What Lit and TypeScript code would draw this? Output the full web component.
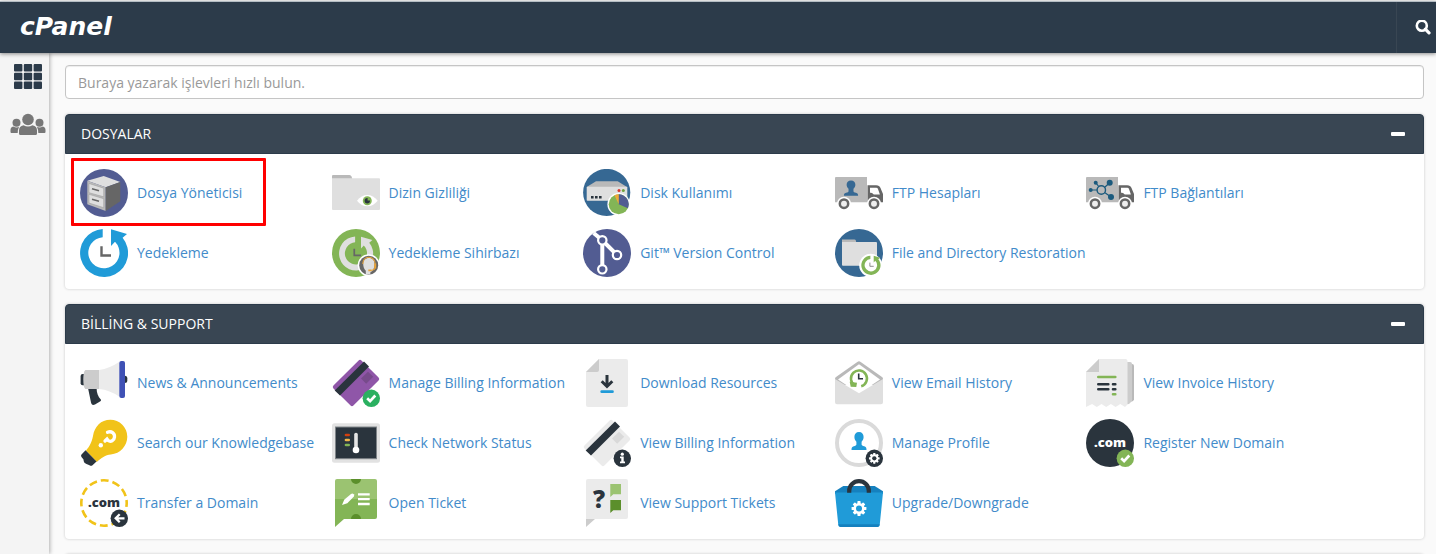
import { LitElement, html, css, svg, SVGTemplateResult } from "lit";
import { customElement, property, state } from "lit/decorators.js";

const DARK = "#2a343d";
const GREEN = "#83b556";
const BLUE = "#209bd8";
const STEEL = "#366893";
const INDIGO = "#525c92";

/* Shared drawing parts, all on a 48 x 48 grid */

const restoreArrow = (fill: string, hands = "#666") => svg`
  <path fill=${fill} d="M22.7 0A24 24 0 1 0 42.6 8.7L47 5 31 .3V17l4-4.2A15.6 15.6 0 1 1 22.7 8.2z"/>
  <path fill="none" stroke=${hands} stroke-width="2.4" d="M21.5 17.3v9.2H31"/>`;

const gear = (cx: number, cy: number, s: number, hole: string) => svg`
  <g transform="translate(${cx} ${cy}) scale(${s})">
    ${[0, 45, 90, 135].map((a) => svg`<rect x="-1.6" y="-7.4" width="3.2" height="14.8" rx=".7" fill="#fff" transform="rotate(${a})"/>`)}
    <circle r="5.5" fill="#fff"/><circle r="3" fill=${hole}/>
  </g>`;

const truck = (load: SVGTemplateResult) => svg`
  <path fill="#b9b9b9" d="M1 8h31v25.3H0V9a1 1 0 0 1 1-1z"/>
  <path fill="#666" d="M32.5 16.3h8.7c2.4 0 3.4.8 4.3 2.6l2.5 6v8.4H32.5z"/>
  <path fill="#fff" d="M35 18.7h6.3c.8 0 1.3.4 1.6 1.100l2 5.700h-5.400c-1.700 0-1.500-1.700-4.500-1.700z"/>
  ${[9, 39].map((x) => svg`<circle cx=${x} cy="34.7" r="7" fill="#fff"/><circle cx=${x} cy="34.7" r="4.2" fill="#eee" stroke="#666" stroke-width="2.5"/>`)}
  ${load}`;

const card = (body: string, patch: string) => svg`
  <rect x="-14.1" y="-19.8" width="28.2" height="39.6" rx="2" fill=${body} transform="translate(24 24) rotate(45)"/>
  <path fill=${DARK} d="M32 2.6l5 5L8 36.6l-5.3-5z"/>
  <path fill=${patch} d="M36 12.7l5.200 5.100-7 6.900-5.200-5.200z"/>`;

const check = (fill: string) => svg`
  <circle cx="39.3" cy="39.3" r="8.7" fill=${fill}/>
  <path d="M35.2 39.3l2.9 2.8 5.200-5.600" fill="none" stroke="#fff" stroke-width="2.7"/>`;

const person = (fill: string) => svg`
  <path fill=${fill} d="M0-9c3 0 4.600 2.100 4.600 5 0 2-.9 3.700-2 4.700v2.800c0 .9 1 1.300 2.600 1.800C7 6 7.500 6.600 7.500 9h-15c0-2.400.5-3 2.300-3.700C-3.600 4.800-2.600 4.400-2.600 3.500V.7c-1.100-1-2-2.700-2-4.700 0-2.900 1.600-5 4.600-5z"/>`;

const disc = (fill: string) => svg`<circle cx="24" cy="24" r="24" fill=${fill}/>`;

const ICONS: Record<string, SVGTemplateResult> = {
  cabinet: svg`${disc(INDIGO)}
    <path fill="#dfdfdf" d="M7.300 11.700L23.700 7l16.600 6-14.600 5.300z"/>
    <path fill="#b9b9b9" d="M7.300 11.700l18.400 6.600V42L7.300 35.300z"/>
    <path fill="#666" d="M25.700 18.300L40.300 13v19.300L25.700 42z"/>
    <path fill="#dfdfdf" stroke="#999" stroke-width=".5" d="M9 14.500l14.700 4.700v8.600L9 23.700zM9 25.300l14.700 4.400v9L9 34z"/>
    <path stroke="#666" stroke-width="1.7" d="M12 19.800l7 2M12 30.300l7 2"/>`,
  folderEye: svg`
    <path fill="#b9b9b9" d="M0 10V7q0-1 1-1h16.500q1.500 0 2 1.500L20.300 10z"/>
    <path fill="#dfdfdf" d="M0 9.300h47q1 0 1 1V40q0 1-1 1H1q-1 0-1-1z"/>
    <path fill="#fff" d="M25 31.700Q29.500 26 35.300 26t10.400 5.700q-4.600 5.500-10.400 5.500T25 31.700z"/>
    <circle cx="35.3" cy="31.7" r="4.5" fill=${GREEN}/><circle cx="35.3" cy="31.7" r="2.7" fill=${DARK}/>
    <path fill=${GREEN} d="M35.600 31.400v-3.100l3.100 1.500v1.600z"/>`,
  disk: svg`<circle cx="23.7" cy="23.5" r="23.6" fill=${STEEL}/>
    <path fill="#b9b9b9" d="M3.700 18L13 12.300h21.700L44 18z"/>
    <rect x="3.7" y="17.7" width="40.6" height="14" rx=".8" fill="#dfdfdf"/>
    <circle cx="36" cy="21.5" r="1.5" fill="#d9362b"/><circle cx="40.3" cy="21.5" r="1.5" fill="#6fa03b"/>
    <path fill=${DARK} d="M8 27h2.600v2.600H8zM12 27h2.600v2.600H12zM16 27h2.600v2.600H16z"/>
    <circle cx="35.7" cy="35.3" r="11.3" fill="#fff"/><circle cx="35.7" cy="35.3" r="10" fill=${GREEN}/>
    <path fill=${INDIGO} d="M35.700 35.300v-10a10 10 0 0 1 9.200 14z"/>
    <path fill="#f0a73a" d="M35.700 35.300l-4.200-9.100a10 10 0 0 1 4.200-.9z"/>`,
  truckUser: truck(svg`<g transform="translate(16 19.2) scale(.95 .85)">${person(STEEL)}</g>`),
  truckNet: truck(svg`
    <path stroke="#1b5a7d" stroke-width="1.2" d="M4.700 21H11M9.700 13.700l3 3.800M23.700 13.700l-5 4.600M25 28l-6-4.300"/>
    <circle cx="15.3" cy="21" r="4.2" fill="none" stroke="#1b5a7d" stroke-width="1.4"/>
    <g fill="#1b5a7d"><circle cx="9.7" cy="13.7" r="2"/><circle cx="4.7" cy="21" r="2"/><circle cx="23.7" cy="13.7" r="3"/><circle cx="25" cy="28" r="3"/></g>`),
  backup: restoreArrow(BLUE),
  backupWizard: svg`${disc(GREEN)}
    <g transform="translate(7 7.5) scale(.71)">${restoreArrow("#dfdfdf")}</g>
    <circle cx="36.7" cy="36.3" r="11" fill="#fff"/><circle cx="36.7" cy="36.3" r="9.5" fill="#666"/>
    <path fill="#dfdfdf" d="M37 29c3.600 0 5.500 2.500 5.500 6 0 4.500-2 7.600-4 8l-.3 2.500h-4.400V41.800c-1.500-1.500-2.600-4-2.600-6.800 0-3.500 2.200-6 5.800-6z"/>
    <path fill="none" stroke="#e8a33a" stroke-width="1.1" d="M30.800 35c0-4 2.500-6.800 6-6.800s6.400 2.800 6.400 6.800v3.500q0 2.500-5 3"/>
    <path fill="#e8a33a" d="M42.200 34.500h2v5h-2zM36.300 40.400h3v1.900h-3z"/>`,
  git: svg`${disc(INDIGO)}
    <path fill="none" stroke="#fff" stroke-width="4" d="M19.300 11.300v29M10.600 4l8.700 7.300L34 26"/>
    <g fill=${INDIGO} stroke="#fff" stroke-width="2.2"><circle cx="19.3" cy="11.3" r="4.2"/><circle cx="34" cy="26" r="4.2"/><circle cx="19.3" cy="40.3" r="4.2"/></g>`,
  folderRestore: svg`${disc(STEEL)}
    <path fill="#b9b9b9" d="M7 14v-3.500h12.500q1 0 1.300 1l.7 2.500z"/>
    <path fill="#dfdfdf" d="M7 13h34q1 0 1 1v22.700H8q-1 0-1-1z"/>
    <circle cx="35.7" cy="36.3" r="11.5" fill="#fff"/>
    <g transform="translate(26.3 26.7) scale(.4)">${restoreArrow(GREEN, "#888")}</g>`,
  megaphone: svg`
    <rect x=".6" y="15" width="6" height="11.3" rx="2" fill=${DARK}/>
    <rect x="42" y="16.7" width="5.3" height="7.3" rx="2.5" fill=${DARK}/>
    <path fill=${DARK} d="M8 29h8.600c0 5 1.500 8.800 4.200 11.500.5.700.2 1.300-.4 1.700L15 45.600c-2.500.8-3.400.2-4-2z"/>
    <path fill="#ccc" d="M5.300 11h14v19h-14q-2-1.500-2-9.500t2-9.500z"/>
    <path fill="#ebebeb" d="M19.300 11q10-1.500 20.200-8.300v35Q29.500 31 19.300 30z"/>
    <rect x="39.3" y="2" width="5.7" height="37" rx="2" fill="#3f51b5"/>`,
  cardCheck: svg`${card("#8f56a8", "#774b8b")}${check("#2ab060")}`,
  download: svg`
    <path fill="#ebebeb" d="M16 0h27q2 0 2 2v44q0 2-2 2H5q-2 0-2-2V13z"/><path fill="#ccc" d="M3 13L16 0v11q0 2-2 2z"/>
    <path fill="none" stroke=${DARK} stroke-width="3" d="M24 16v11M18.700 22.300l5.300 5.200 5.300-5.200"/>
    <path stroke=${BLUE} stroke-width="2.7" stroke-linecap="round" d="M18.700 32.700h10.800"/>`,
  emailHistory: svg`
    <path fill="#b9b9b9" d="M0 20q0-1.500 1-2L22.300 3q1.700-1.400 3.400 0L47 18q1 .5 1 2v6H0z"/>
    <path fill="#fff" d="M3 20.500L24 5.300l21 15.200-21 14z"/>
    <path fill="#dfdfdf" d="M0 20l24 14.300L48 20v23.300q0 2-2 2H2q-2 0-2-2z"/>
    <path fill="none" stroke=${GREEN} stroke-width="2.5" d="M19.700 26.300a8 8 0 1 1 6.500 0.900"/>
    <path fill=${GREEN} d="M14.700 22.700l7.300 1-.7 4.300-5.600-.3z"/>
    <path fill="none" stroke=${DARK} stroke-width="1.6" d="M23.700 14.500v5.200h4.300"/>`,
  invoice: svg`
    <path fill="#b9b9b9" d="M44 5h2q2 0 2 2v34l-2.500 2z"/><path fill="#ccc" d="M39 3h5q2 0 2 2v37l-3 3-4 .5z"/>
    <path fill="#ebebeb" d="M13 0h26.500q2 0 2 2v43.500L39 48l-4.700-3-4.700 3-4.700-3-4.700 3-4.700-3-4.700 3-4.700-3L0 48V13z"/>
    <path fill="#ccc" d="M0 13L13 0v13z"/>
    <g stroke-width="2.6" stroke-linecap="round"><path stroke=${GREEN} d="M12.300 18h17M27 35.200h2.300"/>
    <path stroke=${DARK} d="M12.300 25.300h10M27 25.300h2.300M12.300 30.300h10M27 30.300h2.300"/></g>`,
  bulb: svg`
    <path fill="#f1c319" d="M30.300.8a17 17 0 0 1 17 17c0 9-7 17-16.500 17.700-5.500.5-9.500 3.500-14 7.500L6 31.500c4-4.500 5.700-8.500 7-14.500C14.500 7.500 21 .8 30.300.8z"/>
    <path fill=${DARK} d="M5.600 31.300l10.900 11.200-4 3.800q-1.500 1-3 0L6.500 45q-3-1-3-4.500l-2-2.500q-1-1.500 0-2.600z"/>
    <path fill="none" stroke="#fff" stroke-width="3.3" stroke-linecap="round" d="M27.500 13.300c4-1.700 7.300 1 7 4.700-.3 3.600-3.700 5.400-6.500 3.500l-1-1.500-2 2"/>
    <circle cx="20.8" cy="26.3" r="2.2" fill="#fff"/>`,
  monitor: svg`
    <rect y="4.3" width="48" height="39.4" rx="2.5" fill="#e2e2e2"/>
    <rect x="3.5" y="8" width="41" height="31.7" fill=${DARK} stroke="#808589"/>
    <g stroke-width="2.7" stroke-linecap="round"><path stroke="#d2400f" d="M14 16h2.700"/><path stroke="#f2b84b" d="M14 21h2.700"/><path stroke=${GREEN} d="M14 26h2.700"/></g>
    <path stroke="#e5e5e5" stroke-width="3.6" stroke-linecap="round" d="M24 15.500v15"/><circle cx="24" cy="31" r="3.3" fill="#fff"/>`,
  cardInfo: svg`${card("#ebebeb", "#d9d9d9")}
    <circle cx="39.3" cy="39.3" r="8.7" fill=${DARK}/>
    <circle cx="39.3" cy="35.2" r="1.6" fill="#fff"/><path fill="#fff" d="M37 37.500h3.700v5h1.300v1.700h-5v-1.700h1.300v-3.300H37z"/>`,
  profile: svg`<circle cx="24" cy="24" r="22" fill="#fff" stroke="#dadada" stroke-width="4"/>
    <g transform="translate(24 22)">${person(BLUE)}</g>
    <circle cx="39.3" cy="39.3" r="8.7" fill=${DARK}/>${gear(39.3, 39.3, 0.72, DARK)}`,
  register: svg`${disc(DARK)}<text class="com" x="24" y="27.5" fill="#fff">.com</text>${check(GREEN)}`,
  transfer: svg`
    <circle cx="24" cy="24" r="22.7" fill="none" stroke="#f1c319" stroke-width="2.6" stroke-dasharray="8 3.886" stroke-dashoffset="4"/>
    <text class="com" x="24" y="27.5" fill=${DARK}>.com</text>
    <circle cx="39.3" cy="39.3" r="8.7" fill=${DARK}/>
    <path fill="none" stroke="#fff" stroke-width="2.3" d="M44.500 39.300h-8M39.700 35.300l-4 4 4 4"/>`,
  openTicket: svg`
    <path fill=${GREEN} d="M3 20h42v18q0 2-2 2H12l-9 8z"/><path fill="#9bc371" d="M5 0h38q2 0 2 2v18H3V2q0-2 2-2z"/>
    <path fill="#5b8f2b" d="M19 0h10a5 5 0 0 1-10 0zM19 40a5 5 0 0 1 10 0z"/>
    <path fill="#fff" d="M10 26l2.200-5.300L19 15q1.500-1 2.700.2 1 1.200 0 2.500l-6.400 6.600z"/>
    <path stroke="#fff" stroke-width="2.3" d="M26 15.300h11.700M26 20.200h11.700M26 25h11.700"/>`,
  viewTickets: svg`
    <path fill="#ebebeb" d="M5 0h38q2 0 2 2v36q0 2-2 2H3V2q0-2 2-2z"/><path fill="#ccc" d="M3 40h9l-9 8z"/>
    <text class="query" x="16" y="28.5" fill=${DARK}>?</text>
    <path fill="#9bc371" d="M27.300 5H38v10.300h-7.700l-3 2.700z"/><path fill="#5b8f2b" d="M27.300 21H38v10.300h-7.700l-3 2.700z"/>`,
  bag: svg`
    <path fill="#1580be" d="M0 12.300L8.300 7h31.400l8.300 5.300V15H0z"/>
    <path fill=${BLUE} d="M0 13.500h48L44.700 46q-.2 2-2.200 2h-37q-2 0-2.200-2z"/>
    <path fill="#1580be" d="M3.300 45.200h41.400q-.3 2.800-2.200 2.800h-37q-1.900 0-2.200-2.800z"/>
    <path fill="none" stroke=${DARK} stroke-width="4.2" d="M14.200 13.700v-1.800a9.800 9.800 0 0 1 19.600 0v1.800"/>
    ${gear(24, 29.5, 1, BLUE)}`,
};

interface Feature {
  label: string;
  icon: string;
  marked?: boolean;
}

const FILES: Feature[] = [
  { label: "Dosya Yöneticisi", icon: "cabinet", marked: true },
  { label: "Dizin Gizliliği", icon: "folderEye" },
  { label: "Disk Kullanımı", icon: "disk" },
  { label: "FTP Hesapları", icon: "truckUser" },
  { label: "FTP Bağlantıları", icon: "truckNet" },
  { label: "Yedekleme", icon: "backup" },
  { label: "Yedekleme Sihirbazı", icon: "backupWizard" },
  { label: "Git™ Version Control", icon: "git" },
  { label: "File and Directory Restoration", icon: "folderRestore" },
];

const BILLING: Feature[] = [
  { label: "News & Announcements", icon: "megaphone" },
  { label: "Manage Billing Information", icon: "cardCheck" },
  { label: "Download Resources", icon: "download" },
  { label: "View Email History", icon: "emailHistory" },
  { label: "View Invoice History", icon: "invoice" },
  { label: "Search our Knowledgebase", icon: "bulb" },
  { label: "Check Network Status", icon: "monitor" },
  { label: "View Billing Information", icon: "cardInfo" },
  { label: "Manage Profile", icon: "profile" },
  { label: "Register New Domain", icon: "register" },
  { label: "Transfer a Domain", icon: "transfer" },
  { label: "Open Ticket", icon: "openTicket" },
  { label: "View Support Tickets", icon: "viewTickets" },
  { label: "Upgrade/Downgrade", icon: "bag" },
];

@customElement("feature-panel")
class FeaturePanel extends LitElement {
  @property() heading = "";
  @property({ attribute: false }) items: Feature[] = [];
  @state() private open = true;

  static styles = css`
    :host {
      display: block;
      background: #fff;
      border-radius: 4px;
      box-shadow: 0 0 3px rgba(0, 0, 0, 0.2);
    }
    .head {
      box-sizing: border-box;
      display: flex;
      align-items: center;
      justify-content: space-between;
      height: 40px;
      padding: 0 18px 0 15px;
      border: 1px solid #2c3b4a;
      border-radius: 4px 4px 0 0;
      background: #394653;
      color: #fff;
    }
    h2 {
      margin: 0;
      font-size: 14px;
      font-weight: 400;
      line-height: 20px;
    }
    .toggle {
      display: flex;
      align-items: center;
      height: 20px;
      padding: 0;
      border: 0;
      background: none;
      cursor: pointer;
    }
    .bar {
      width: 14px;
      height: 4px;
      border-radius: 1px;
      background: #fff;
    }
    .grid {
      display: grid;
      grid-template-columns: repeat(5, 18.72%);
      row-gap: 12px;
      margin: 0;
      padding: 15px 0 12px 15px;
      list-style: none;
    }
    .cell {
      display: flex;
    }
    .link {
      position: relative;
      display: flex;
      align-items: center;
      gap: 9px;
      color: #428bca;
      line-height: 20px;
      text-decoration: none;
      white-space: nowrap;
    }
    .marked::after {
      content: "";
      position: absolute;
      inset: -11px -24px -9px -9px;
      border: 3px solid #f00;
      border-radius: 1px;
    }
    .icon {
      width: 48px;
      height: 48px;
      flex: none;
    }
    .com,
    .query {
      font-family: "Open Sans", sans-serif;
      font-weight: 800;
      text-anchor: middle;
    }
    .com {
      font-size: 13px;
    }
    .query {
      font-size: 24px;
    }
  `;

  render() {
    return html`
      <div class="head">
        <h2>${this.heading}</h2>
        <button class="toggle" aria-label=${this.heading} aria-expanded=${this.open} @click=${() => (this.open = !this.open)}>
          <span class="bar"></span>
        </button>
      </div>
      ${this.open
        ? html`<ul class="grid">
            ${this.items.map(
              (f) => html`<li class="cell">
                <a class="link ${f.marked ? "marked" : ""}" href="#">
                  <svg class="icon" viewBox="0 0 48 48" aria-hidden="true">${ICONS[f.icon]}</svg>
                  <span>${f.label}</span>
                </a>
              </li>`
            )}
          </ul>`
        : ""}
    `;
  }
}

@customElement("app-root")
class AppRoot extends LitElement {
  static styles = css`
    :host {
      display: flex;
      flex-direction: column;
      height: 100vh;
      overflow: hidden;
      background: #fafafa;
      font: 14px/20px "Open Sans", sans-serif;
    }
    .top {
      position: relative;
      z-index: 2;
      display: flex;
      justify-content: space-between;
      flex: none;
      height: 51px;
      margin-top: 1px;
      border-top: 1px solid #b4bcc3;
      background: #2c3b4a;
      box-shadow: 0 1px 4px rgba(0, 0, 0, 0.45);
    }
    .brand {
      padding: 6px 20px;
      color: #fff;
      font-family: "DejaVu Sans", sans-serif;
      font-size: 25px;
      font-style: italic;
      font-weight: 700;
      line-height: 38px;
      text-decoration: none;
    }
    .search {
      display: flex;
      align-items: center;
      width: 40px;
      padding: 0 0 0 18px;
      border: 0;
      border-left: 1px solid #394653;
      background: none;
      cursor: pointer;
    }
    .search svg {
      width: 16px;
      height: 16px;
      flex: none;
    }
    .body {
      display: flex;
      flex: 1;
      min-height: 0;
    }
    .side {
      display: flex;
      flex-direction: column;
      align-items: center;
      gap: 24px;
      box-sizing: border-box;
      flex: none;
      width: 49px;
      padding: 11px 0 0 7px;
      background: #f4f4f4;
      box-shadow: 1px 0 4px rgba(0, 0, 0, 0.3);
    }
    .side a {
      display: flex;
    }
    .apps {
      width: 28px;
      height: 25px;
    }
    .users {
      width: 36px;
      height: 22px;
    }
    main {
      flex: 1;
      min-width: 0;
      padding: 12px 12px 0 16px;
    }
    .find {
      box-sizing: border-box;
      display: block;
      width: 100%;
      height: 34px;
      margin-bottom: 15px;
      padding: 0 12px;
      border: 1px solid #c5c5c5;
      border-radius: 4px;
      background: #fff;
      box-shadow: inset 0 1px 1px rgba(0, 0, 0, 0.075);
      color: #555;
      font: inherit;
    }
    .find::placeholder {
      color: #999;
      opacity: 1;
    }
    .panels {
      display: flex;
      flex-direction: column;
      gap: 15px;
    }
  `;

  render() {
    return html`
      <header class="top">
        <a class="brand" href="#">cPanel</a>
        <button class="search" aria-label="Search">
          <svg viewBox="0 0 16 16" fill="none" stroke="#fff" aria-hidden="true">
            <circle cx="6.8" cy="5.7" r="5" stroke-width="2.6" />
            <path d="M10.300 9.200l3.700 3.700" stroke-width="3.2" stroke-linecap="round" />
          </svg>
        </button>
      </header>
      <div class="body">
        <nav class="side">
          <a href="#" aria-label="Home">
            <svg class="apps" viewBox="0 0 28 25" fill="#2c3b4a" aria-hidden="true">
              ${[0, 9.8, 19.6].map((x) => [0, 8.8, 17.6].map((y) => svg`<rect x=${x} y=${y} width="8.4" height="7.4" rx="1"/>`))}
            </svg>
          </a>
          <a href="#" aria-label="Users">
            <svg class="users" viewBox="0 0 36 22" fill="#777" aria-hidden="true">
              <circle cx="18" cy="6.5" r="5.8" />
              <circle cx="6.5" cy="9.8" r="4" /><circle cx="29.5" cy="9.8" r="4" />
              <path d="M9 20.500v-3q0-4.500 4.500-5.300 4.500 2.800 9 0Q27 13 27 17.500v3q0 1.500-1.500 1.500h-15Q9 22 9 20.500zM.5 19v-2q0-3 2.700-3.500 3 1.700 5.800.5-1.300 2.500-1.300 6H1.500q-1 0-1-1zM35.500 19v-2q0-3-2.700-3.500-3 1.700-5.800.5 1.300 2.500 1.300 6h6.200q1 0 1-1z" />
            </svg>
          </a>
        </nav>
        <main>
          <input class="find" type="text" placeholder="Buraya yazarak işlevleri hızlı bulun." aria-label="Buraya yazarak işlevleri hızlı bulun." />
          <div class="panels">
            <feature-panel heading="DOSYALAR" .items=${FILES}></feature-panel>
            <feature-panel heading="BİLLİNG &amp; SUPPORT" .items=${BILLING}></feature-panel>
            <feature-panel></feature-panel>
          </div>
        </main>
      </div>
    `;
  }
}
